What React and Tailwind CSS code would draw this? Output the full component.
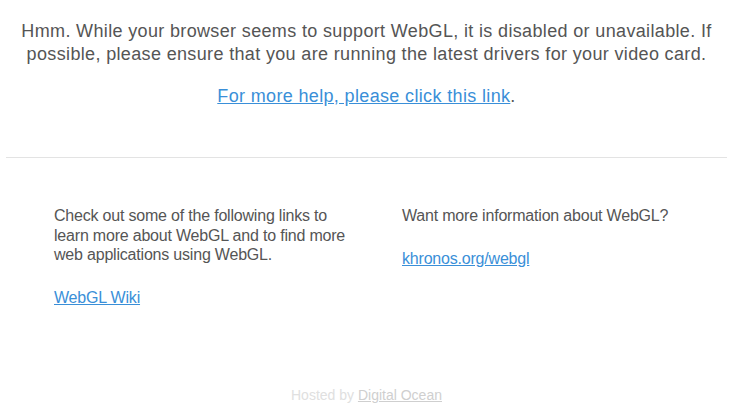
export default function App() {
  return (
    <div className="w-[744px] h-[420px] bg-white font-['Liberation_Sans',Arial,sans-serif] text-[#555]">
      <div className="w-[733px]">
        {/* Warning */}
        <div className="pt-[20px] px-[8px] text-center text-[18px] leading-[23px] tracking-[0.35px]">
          <p>
            Hmm. While your browser seems to support WebGL, it is disabled or unavailable. If possible, please
            ensure that you are running the latest drivers for your video card.
          </p>
          <p className="mt-[19px]">
            <a href="#" className="text-[#3a8fd8] underline">For more help, please click this link</a>.
          </p>
        </div>

        <hr className="mt-[49px] mx-[6px] border-t border-[#e3e3e3]" />

        {/* Links */}
        <div className="flex pl-[54px] pt-[48px] text-[16px] leading-[19.5px] tracking-[-0.2px]">
          <div className="w-[348px] pr-[48px]">
            <p>Check out some of the following links to learn more about WebGL and to find more web applications using WebGL.</p>
            <p className="mt-[23px]">
              <a href="#" className="text-[#3a8fd8] underline">WebGL Wiki</a>
            </p>
          </div>
          <div>
            <p>Want more information about WebGL?</p>
            <p className="mt-[23px]">
              <a href="#" className="text-[#3a8fd8] underline">khronos.org/webgl</a>
            </p>
          </div>
        </div>

        {/* Footer */}
        <p className="mt-[80px] text-center text-[14px] leading-[16px] text-[#e0e0e0]">
          Hosted by <a href="#" className="text-[#cfcfcf] underline">Digital Ocean</a>
        </p>
      </div>
    </div>
  )
}
